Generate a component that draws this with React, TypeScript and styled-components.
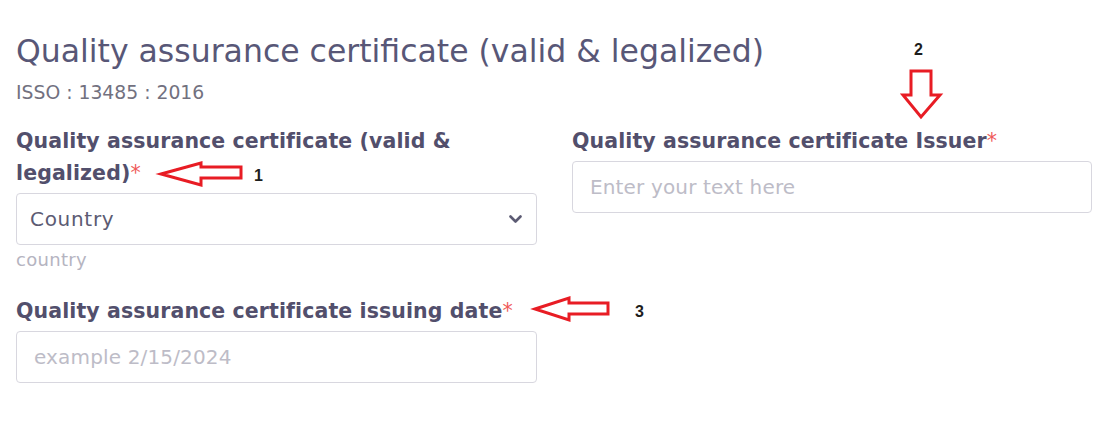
import styled, { createGlobalStyle } from "styled-components";

const GlobalStyle = createGlobalStyle`
  html, body {
    margin: 0;
    padding: 0;
    background: #ffffff;
  }
  body {
    font-family: "DejaVu Sans", "Noto Sans", sans-serif;
    color: #514f6c;
  }
  * { box-sizing: border-box; }
`;

const Page = styled.div`
  position: relative;
  width: 1113px;
  height: 422px;
  padding: 32px 0 0 16px;
`;

const Title = styled.h1`
  margin: 0;
  font-size: 31.5px;
  line-height: 38px;
  font-weight: 400;
  color: #585777;
`;

const Subtitle = styled.div`
  margin-top: 11px;
  font-size: 18.8px;
  line-height: 24px;
  color: #72717f;
`;

const Grid = styled.div`
  display: grid;
  grid-template-columns: 521px 520px;
  column-gap: 35px;
  row-gap: 23px;
  margin-top: 20px;
  align-items: start;
`;

const Field = styled.div`
  display: flex;
  flex-direction: column;
  align-items: flex-start;
`;

const Label = styled.label`
  font-size: 20.5px;
  line-height: 32px;
  font-weight: 700;
  letter-spacing: 0.1px;
  color: #524f6c;
  margin-bottom: 4px;
`;

const Star = styled.span`
  color: #ef5a5a;
  font-weight: 400;
`;

const Box = styled.div<{ $placeholder?: boolean }>`
  display: flex;
  align-items: center;
  justify-content: space-between;
  align-self: stretch;
  height: 52px;
  padding: 0 14px 0 ${(p) => (p.$placeholder ? "17px" : "13px")};
  border: 1px solid #d8d7df;
  border-radius: 4px;
  font-size: 20px;
  color: ${(p) => (p.$placeholder ? "#bdbcc7" : "#5c5b73")};
  letter-spacing: ${(p) => (p.$placeholder ? "0.15px" : "0.7px")};
`;

const Helper = styled.div`
  margin-top: 3px;
  font-size: 18px;
  line-height: 24px;
  letter-spacing: 0.3px;
  color: #b5b4c1;
`;

const Arrow = styled.svg`
  position: absolute;
  overflow: visible;
`;

const Marker = styled.span`
  position: absolute;
  font-family: "Liberation Sans", Arial, sans-serif;
  font-weight: 700;
  font-size: 16px;
  line-height: 16px;
  color: #1d1d1d;
`;

const Chevron = () => (
  <svg width="13" height="9" viewBox="0 0 13 9">
    <path d="M1.5 1.5 L6.5 6.5 L11.5 1.5" fill="none" stroke="#5c5b73" strokeWidth="2.6" strokeLinecap="round" strokeLinejoin="round" />
  </svg>
);

export default function App() {
  return (
    <>
      <GlobalStyle />
      <Page>
        <Title>Quality assurance certificate (valid &amp; legalized)</Title>
        <Subtitle>ISSO : 13485 : 2016</Subtitle>
        <Grid>
          <Field>
            <Label>
              Quality assurance certificate (valid &amp; legalized)<Star>*</Star>
            </Label>
            <Box>
              <span>Country</span>
              <Chevron />
            </Box>
            <Helper>country</Helper>
          </Field>
          <Field>
            <Label>
              Quality assurance certificate Issuer<Star>*</Star>
            </Label>
            <Box $placeholder>Enter your text here</Box>
          </Field>
          <Field>
            <Label>
              Quality assurance certificate issuing date<Star>*</Star>
            </Label>
            <Box $placeholder>example 2/15/2024</Box>
          </Field>
        </Grid>

        <Arrow style={{ left: 160, top: 162 }} width="82" height="24" viewBox="0 0 82 24">
          <path d="M1 12 L41 1 L41 5 L81 5 L81 16 L41 16 L41 23 Z" fill="none" stroke="#e81c24" strokeWidth="3" strokeLinejoin="miter" />
        </Arrow>
        <Marker style={{ left: 254, top: 168 }}>1</Marker>

        <Arrow style={{ left: 902, top: 70 }} width="39" height="49" viewBox="0 0 39 49">
          <path d="M9 1 L29 1 L29 25 L38 25 L19 47 L1 25 L9 25 Z" fill="none" stroke="#e81c24" strokeWidth="3" strokeLinejoin="miter" />
        </Arrow>
        <Marker style={{ left: 914, top: 42 }}>2</Marker>

        <Arrow style={{ left: 534, top: 297 }} width="76" height="24" viewBox="0 0 76 24">
          <path d="M1 12 L35 1 L35 6 L74 6 L74 17 L35 17 L35 23 Z" fill="none" stroke="#e81c24" strokeWidth="3" strokeLinejoin="miter" />
        </Arrow>
        <Marker style={{ left: 635, top: 304 }}>3</Marker>
      </Page>
    </>
  );
}
